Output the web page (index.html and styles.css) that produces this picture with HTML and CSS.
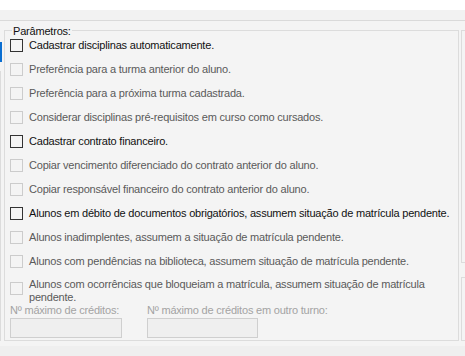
FILE: index.html
```html
<!DOCTYPE html>
<html lang="pt-BR">
<head>
  <meta charset="UTF-8">
  <title>Parâmetros</title>
  <link rel="stylesheet" href="styles.css">
</head>
<body>
  <div class="window">
    <div class="titlebar"></div>
    <div class="tabs"></div>

    <div class="content">
      <div class="rail">
        <span class="rail-mark"></span>
        <span class="rail-line"></span>
      </div>

      <fieldset class="params">
        <legend>Parâmetros:</legend>

        <label class="opt first"><span class="box"></span><span>Cadastrar disciplinas automaticamente.</span></label>
        <label class="opt off"><span class="box"></span><span>Preferência para a turma anterior do aluno.</span></label>
        <label class="opt off"><span class="box"></span><span>Preferência para a próxima turma cadastrada.</span></label>
        <label class="opt off"><span class="box"></span><span>Considerar disciplinas pré-requisitos em curso como cursados.</span></label>
        <label class="opt"><span class="box"></span><span>Cadastrar contrato financeiro.</span></label>
        <label class="opt off"><span class="box"></span><span>Copiar vencimento diferenciado do contrato anterior do aluno.</span></label>
        <label class="opt off"><span class="box"></span><span>Copiar responsável financeiro do contrato anterior do aluno.</span></label>
        <label class="opt"><span class="box"></span><span>Alunos em débito de documentos obrigatórios, assumem situação de matrícula pendente.</span></label>
        <label class="opt off"><span class="box"></span><span>Alunos inadimplentes, assumem a situação de matrícula pendente.</span></label>
        <label class="opt off"><span class="box"></span><span>Alunos com pendências na biblioteca, assumem situação de matrícula pendente.</span></label>
        <label class="opt off wrap"><span class="box"></span><span>Alunos com ocorrências que bloqueiam a matrícula, assumem situação de matrícula pendente.</span></label>

        <div class="limits">
          <div class="limit">
            <span class="limit-label">Nº máximo de créditos:</span>
            <span class="field"></span>
          </div>
          <div class="limit">
            <span class="limit-label">Nº máximo de créditos em outro turno:</span>
            <span class="field"></span>
          </div>
        </div>
      </fieldset>

      <div class="side">
        <div class="side-box side-top"></div>
        <div class="side-box side-bottom"></div>
      </div>
    </div>

    <div class="statusbar"></div>
  </div>
</body>
</html>
```

FILE: styles.css
```css
body {
  margin: 0;
  font-family: "Liberation Sans", Arial, sans-serif;
  font-size: 11px;
  letter-spacing: -0.2px;
  color: #111;
  background-color: #fff;
}

.window {
  width: 465px;
  height: 356px;
  display: flex;
  flex-direction: column;
  overflow: hidden;
  background-color: #f4f4f4;
}

.titlebar {
  height: 10px;
  background-color: #fff;
}

.tabs {
  height: 10px;
  background-color: #f2f2f2;
  border-bottom: 1px solid #dadada;
}

.content {
  display: flex;
  padding-top: 1px;
  padding-bottom: 5px;
}

/* left list edge with the selection marker */
.rail {
  width: 4px;
  flex-shrink: 0;
  display: flex;
  flex-direction: column;
}

.rail-mark {
  margin-top: 20px;
  width: 2px;
  height: 20px;
  background-color: #0a6ed1;
}

.rail-line {
  margin-top: 9px;
  width: 1px;
  flex: 1;
  background-color: #dcdcdc;
}

.params {
  box-sizing: border-box;
  width: 455px;
  flex-shrink: 0;
  margin: 0;
  padding: 0 4px 2px 5px;
  border: 1px solid #dcdcdc;
  min-width: 0;
}

.params legend {
  margin-left: 2px;
  padding: 2px 1px 0;
  line-height: 14px;
  color: #111;
}

.opt {
  display: flex;
  align-items: center;
  gap: 6px;
  height: 24px;
  white-space: nowrap;
}

.opt.first {
  margin-top: -5px;
}

.box {
  box-sizing: border-box;
  width: 13px;
  height: 13px;
  flex-shrink: 0;
  border: 1px solid #333;
}

.opt.off {
  color: #5a5a5a;
}

.opt.off .box {
  border-color: #cccccc;
}

.opt.wrap {
  height: auto;
  align-items: flex-start;
  padding-top: 5px;
  line-height: 13px;
  white-space: normal;
}

.opt.wrap .box {
  margin-top: 4px;
}

.limits {
  display: flex;
  gap: 25px;
  margin-top: -1px;
}

.limit {
  display: flex;
  flex-direction: column;
  gap: 1px;
}

.limit-label {
  line-height: 14px;
  color: #a3a3a3;
  white-space: nowrap;
}

.field {
  box-sizing: border-box;
  width: 112px;
  height: 20px;
  border: 1px solid #cfcfcf;
  background-color: #efefef;
}

.limit + .limit .field {
  width: 111px;
}

/* panels cut off by the right edge */
.side {
  margin-left: 2px;
  margin-top: 8px;
  display: flex;
  flex-direction: column;
  gap: 14px;
}

.side-box {
  width: 20px;
  border: 1px solid #dcdcdc;
}

.side-top {
  height: 231px;
}

.side-bottom {
  height: 62px;
}

.statusbar {
  flex: 1;
  background-color: #efefef;
}
```
